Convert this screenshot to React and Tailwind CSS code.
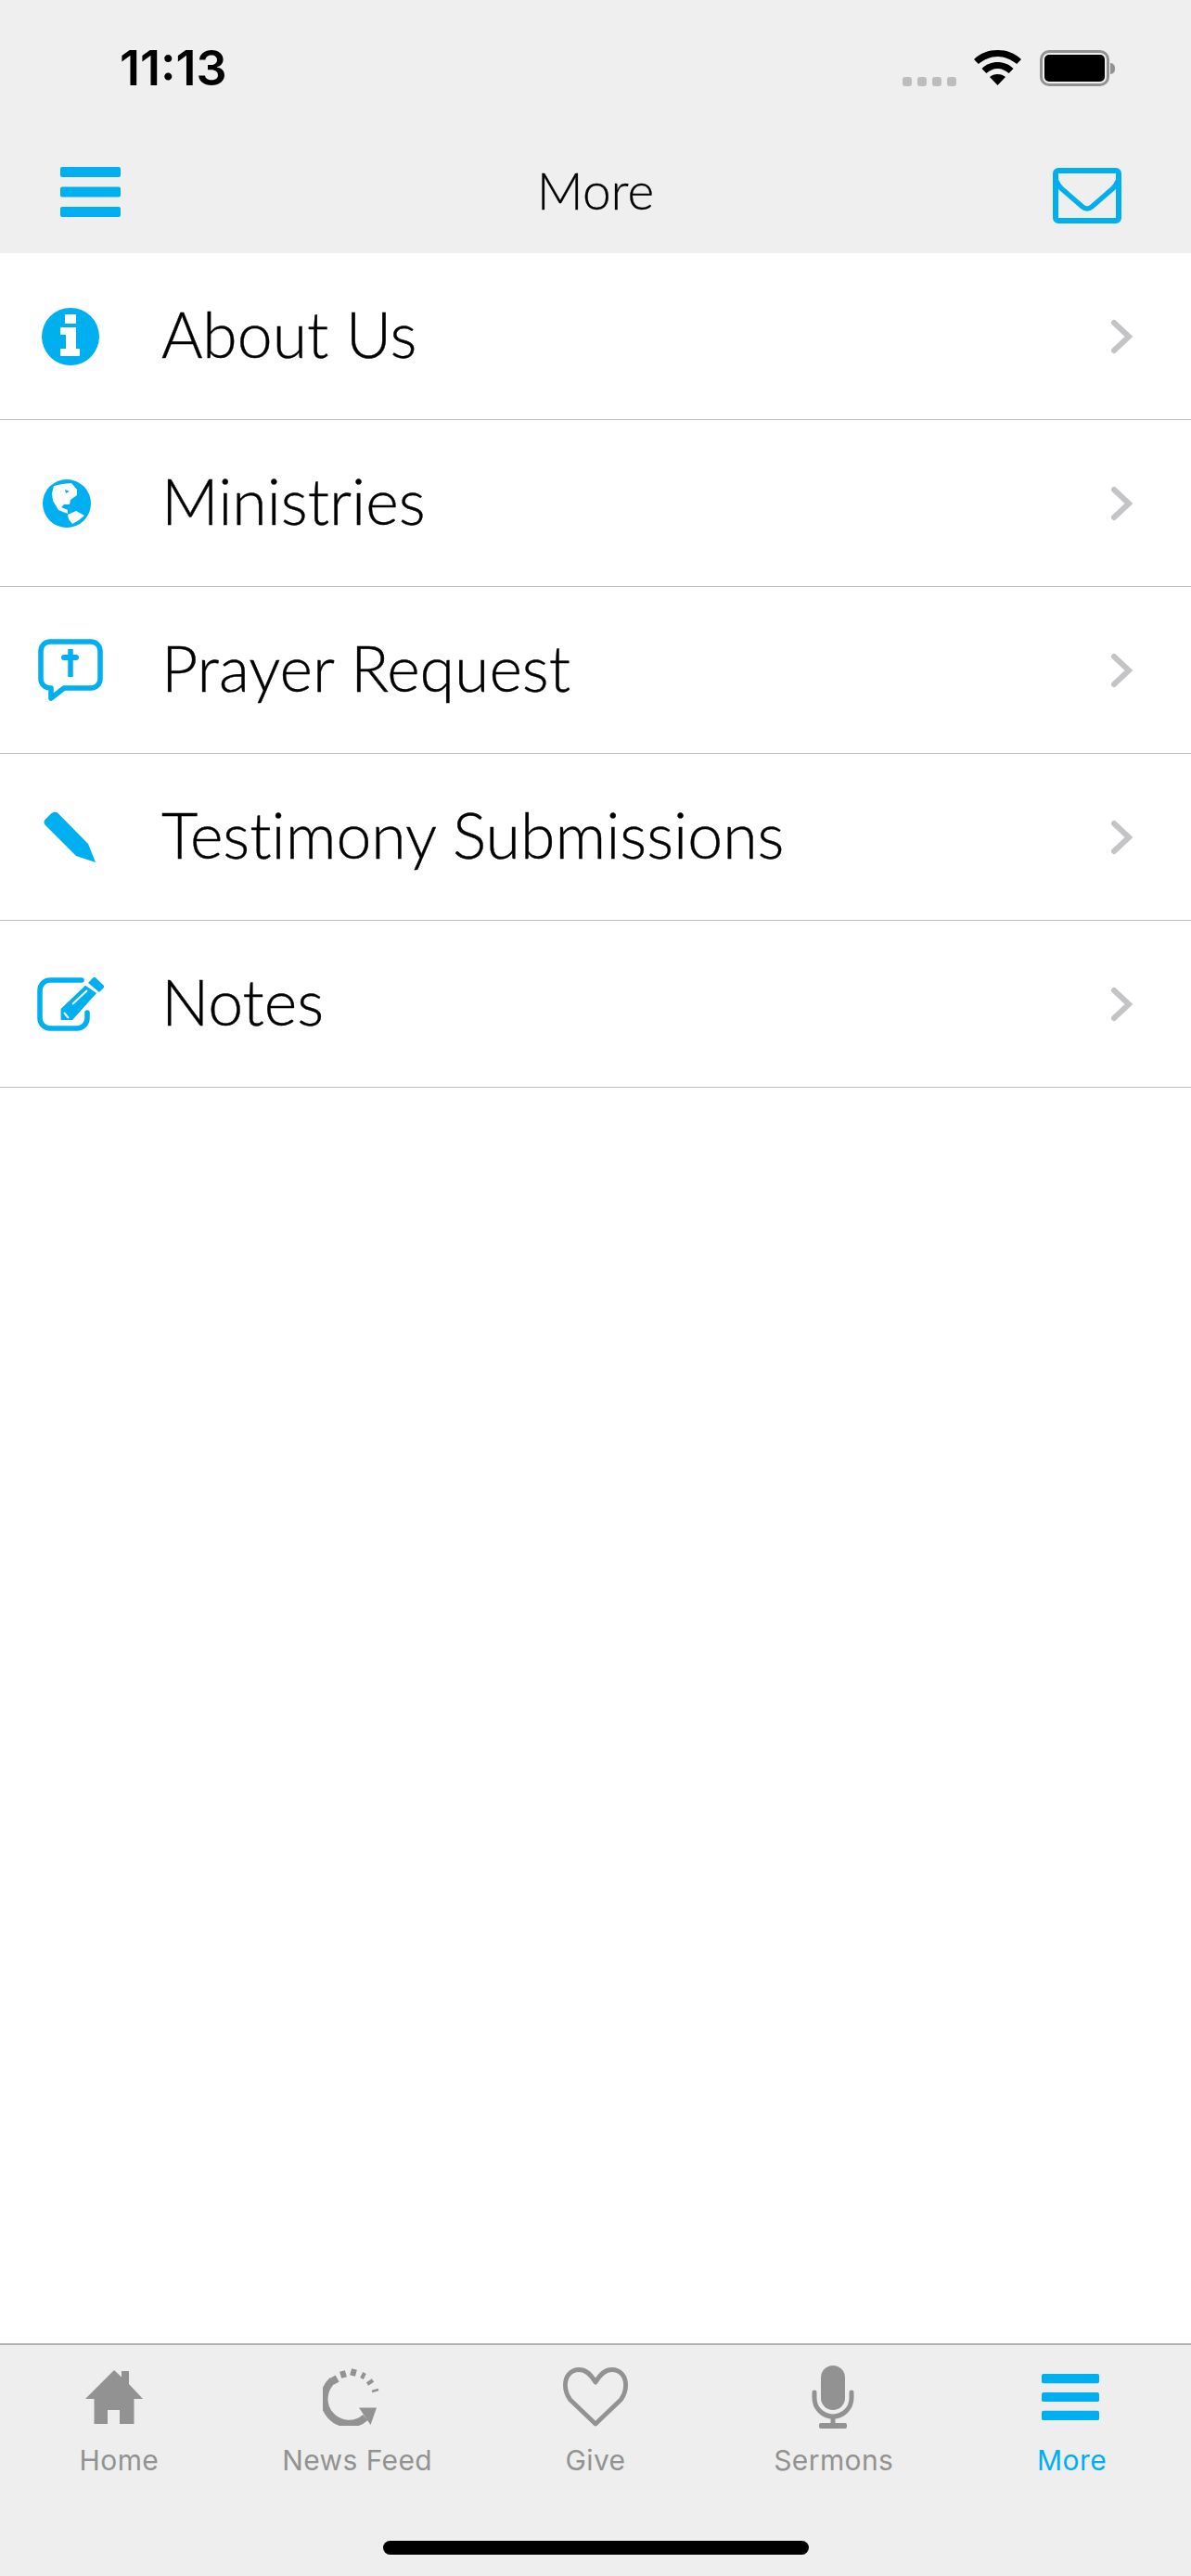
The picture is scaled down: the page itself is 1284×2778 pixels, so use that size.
const BLUE = "#00aff0";
const GRAY = "#929292";

function Hamburger({ w = 65, h = 54 }) {
  return (
    <svg width={w} height={h} viewBox="0 0 66 54" fill={BLUE} className="block" preserveAspectRatio="none">
      <rect x="0" y="0" width="66" height="11" rx="2" />
      <rect x="0" y="21.500" width="66" height="11" rx="2" />
      <rect x="0" y="43" width="66" height="11" rx="2" />
    </svg>
  );
}

function InfoIcon() {
  return (
    <svg width="62" height="62" viewBox="0 0 62 62" className="block">
      <circle cx="31" cy="31" r="31" fill={BLUE} />
      <path fill="#fff" d="M26 7h10a1 1 0 0 1 1 1v8a1 1 0 0 1-1 1H26a1 1 0 0 1-1-1V8a1 1 0 0 1 1-1zM21 21h16v23h3a1 1 0 0 1 1 1v6a1 1 0 0 1-1 1H21a1 1 0 0 1-1-1v-6a1 1 0 0 1 1-1h5V29h-5a1 1 0 0 1-1-1v-6a1 1 0 0 1 1-1z" />
    </svg>
  );
}

function GlobeIcon() {
  return (
    <svg width="52" height="52" viewBox="0 0 52 52" className="block">
      <circle cx="26" cy="26" r="26" fill={BLUE} />
      <path fill="#fff" fillRule="evenodd" d="M12 7L21 5L31 4L37 11L37 17L30 22L29 27L23 27L20 30L27 33L27 37L17 33L11 23L10 15zM24 11L29 13L25 15z" />
      <path fill="#fff" d="M27 38L36 34L45 39L39 44L32 48L28 43z" />
    </svg>
  );
}

function PrayerIcon() {
  return (
    <svg width="70" height="67" viewBox="0 0 70 67" fill="none" className="block">
      <path d="M13 3h44a10 10 0 0 1 10 10v30a10 10 0 0 1-10 10H28L14 64V53h-1A10 10 0 0 1 3 43V13A10 10 0 0 1 13 3z" stroke={BLUE} strokeWidth="5.500" strokeLinejoin="round" />
      <path d="M35 11v30" stroke={BLUE} strokeWidth="5.500" />
      <path d="M28 20h13" stroke={BLUE} strokeWidth="6" strokeLinecap="round" />
    </svg>
  );
}

function PencilIcon() {
  return (
    <svg width="56" height="56" viewBox="0 0 56 56" className="block">
      <path fill={BLUE} d="M8 2.500C10 .500 13 0 15 1.500L48 35L56 55L35 48L2 15C0 13 0 10.500 1.500 9z" />
    </svg>
  );
}

function NotesIcon() {
  return (
    <svg width="72" height="58" viewBox="0 0 72 58" fill="none" className="block">
      <path d="M48 3H14A11 11 0 0 0 3 14v30a11 11 0 0 0 11 11h29a11 11 0 0 0 11-11V38" stroke={BLUE} strokeWidth="5.500" strokeLinecap="round" />
      <path fill={BLUE} d="M55 6L60 .800a2.500 2.500 0 0 1 3.500 0L71.500 8.500a2.500 2.500 0 0 1 0 3L67 16zM52 8.700L64 17L38 46H25.600V34z" />
      <path stroke="#fff" strokeWidth="2" d="M38 29L54 14M29 38l5 6" />
    </svg>
  );
}

function Chevron() {
  return (
    <svg width="26" height="40" viewBox="0 0 26 40" fill="none" className="block">
      <path d="M5 5l16 15L5 35" stroke="#c4c4c6" strokeWidth="6" strokeLinecap="round" strokeLinejoin="miter" />
    </svg>
  );
}

function HomeIcon() {
  return (
    <svg width="62" height="59" viewBox="0 0 62 59" className="block">
      <path fill={GRAY} d="M31 0L39 7.500V1h8v14L62 31H52.500v27H37V43H24v15H9.500V31H0z" />
    </svg>
  );
}

function FeedIcon() {
  return (
    <svg width="62" height="62" viewBox="0 0 62 62" fill="none" className="block">
      <path d="M10.500 13A26 26 0 0 0 46 53" stroke={GRAY} strokeWidth="8" />
      <path fill={GRAY} d="M39 42.500h19l-6.500 18.500z" />
      <path stroke={GRAY} strokeWidth="6" d="M11 9l4 7M21 3l2 7M34 1l-2 7" />
      <path stroke={GRAY} strokeWidth="4" d="M45 5l-3 6M54 13l-6 4" />
      <path stroke={GRAY} strokeWidth="2.500" d="M60 23l-7 2" />
    </svg>
  );
}

function HeartIcon() {
  return (
    <svg width="70" height="64" viewBox="0 0 72 64" preserveAspectRatio="none" fill="none" className="block">
      <path d="M36 16C31 8 26 2.500 18 2.500C8 2.500 2.500 10 2.500 19C2.500 26 5 31 8 35L36 61L64 35C67 31 69.500 26 69.500 19C69.500 10 64 2.500 54 2.500C46 2.500 41 8 36 16z" stroke={GRAY} strokeWidth="5" strokeLinejoin="round" />
    </svg>
  );
}

function MicIcon() {
  return (
    <svg width="46" height="68" viewBox="0 0 46 68" fill="none" className="block">
      <rect x="10" y="0" width="26" height="48" rx="13" fill={GRAY} />
      <path d="M3 29v6a20 20 0 0 0 40 0V29" stroke={GRAY} strokeWidth="5" strokeLinecap="round" />
      <path d="M23 56v8" stroke={GRAY} strokeWidth="5" />
      <rect x="8" y="62" width="30" height="6" rx="2" fill={GRAY} />
    </svg>
  );
}

function Row({ icon, label, iconPad }) {
  return (
    <div className="flex h-[180px] items-center border-b border-[#bcbcbe] bg-white">
      <div className={`flex w-[174px] shrink-0 items-center ${iconPad}`}>{icon}</div>
      <span className="mb-[6px] flex-1 text-[68px] leading-none text-black font-['Lato','Noto_Sans',sans-serif] font-light [font-variant-ligatures:none] [-webkit-text-stroke:0.4px_black]">{label}</span>
      <div className="mr-[62px]"><Chevron /></div>
    </div>
  );
}

function Tab({ icon, label, active, iconShift = "" }) {
  return (
    <div className="flex flex-1 flex-col items-center">
      <div className={`flex h-[68px] items-center justify-center ${iconShift}`}>{icon}</div>
      <span className={`mt-[16px] text-[30px] leading-[36px] font-['Inter','Liberation_Sans',sans-serif] tracking-[0.4px] ${active ? "text-[#00aff0]" : "text-[#929292]"}`}>{label}</span>
    </div>
  );
}

export default function App() {
  return (
    <div className="flex h-[2778px] w-[1284px] flex-col overflow-hidden bg-white">
      <header className="shrink-0 bg-[#efefef]">
        <div className="flex h-[133px] items-start justify-between pt-[52px] pl-[129px] pr-[82px]">
          <span className="text-[52px] leading-[44px] font-semibold text-black font-['Inter','Liberation_Sans',sans-serif]">11:13</span>
          <div className="flex items-start pt-[2px]">
            <div className="mt-[29px] flex gap-[6px]">
              <span className="h-[10px] w-[10px] rounded-[3px] bg-[#bdbdbd]" />
              <span className="h-[10px] w-[10px] rounded-[3px] bg-[#bdbdbd]" />
              <span className="h-[10px] w-[10px] rounded-[3px] bg-[#bdbdbd]" />
              <span className="h-[10px] w-[10px] rounded-[3px] bg-[#bdbdbd]" />
            </div>
            <svg width="51" height="38" viewBox="0 0 42 38" preserveAspectRatio="none" className="ml-[19px] block" fill="#000">
              <path d="M21 0C13 0 6 3 0 10l4 5c5-5 11-8 17-8s12 3 17 8l4-5C36 3 29 0 21 0z" />
              <path d="M21 13c-5 0-10 2-14 7l4 5c3-3 6-5 10-5s7 2 10 5l4-5c-4-5-9-7-14-7z" />
              <path d="M21 26c-3 0-5 1-7 3l7 9 7-9c-2-2-4-3-7-3z" />
            </svg>
            <div className="ml-[20px] flex items-center">
              <div className="h-[39px] w-[75px] rounded-[10px] border-[3px] border-[#929292] bg-[#efefef] p-[2px]">
                <div className="h-full w-full rounded-[5px] bg-black" />
              </div>
              <div className="ml-[1px] h-[12px] w-[5px] rounded-r-full bg-[#929292]" />
            </div>
          </div>
        </div>
        <div className="relative flex h-[140px] items-start justify-between pr-[75px] pl-[65px] pt-[47px]">
          <Hamburger />
          <span className="absolute left-0 right-0 top-[40px] text-center text-[55px] leading-[64px] font-light text-black font-['Lato',sans-serif] [-webkit-text-stroke:0.3px_black]">More</span>
          <svg width="74" height="60" viewBox="0 0 74 60" fill="none" className="mt-[1px] block">
            <rect x="3" y="3" width="68" height="54" rx="3" stroke={BLUE} strokeWidth="6" />
            <path d="M4 14c1 3 3 6 5 8l23 20c3 2.500 7 2.500 10 0l23-20c2-2 4-5 5-8" stroke={BLUE} strokeWidth="5.500" />
          </svg>
        </div>
      </header>

      <main className="flex-1 bg-white">
        <Row icon={<InfoIcon />} label="About Us" iconPad="pl-[45px]" />
        <Row icon={<GlobeIcon />} label="Ministries" iconPad="pl-[46px]" />
        <Row icon={<PrayerIcon />} label="Prayer Request" iconPad="pl-[41px]" />
        <Row icon={<PencilIcon />} label="Testimony Submissions" iconPad="pl-[47px]" />
        <Row icon={<NotesIcon />} label="Notes" iconPad="pl-[40px]" />
      </main>

      <footer className="relative h-[251px] shrink-0 border-t-2 border-[#b2b2b2] bg-[#eeeeee]">
        <div className="flex pt-[22px]">
          <Tab icon={<HomeIcon />} label="Home" iconShift="mr-[10px]" />
          <Tab icon={<FeedIcon />} label="News Feed" iconShift="mr-[12px]" />
          <Tab icon={<HeartIcon />} label="Give" />
          <Tab icon={<MicIcon />} label="Sermons" iconShift="mr-[2px]" />
          <Tab icon={<Hamburger w={62} h={50} />} label="More" iconShift="mr-[3px]" active />
        </div>
        <div className="absolute bottom-[23px] left-[413px] h-[15px] w-[459px] rounded-full bg-black" />
      </footer>
    </div>
  );
}
